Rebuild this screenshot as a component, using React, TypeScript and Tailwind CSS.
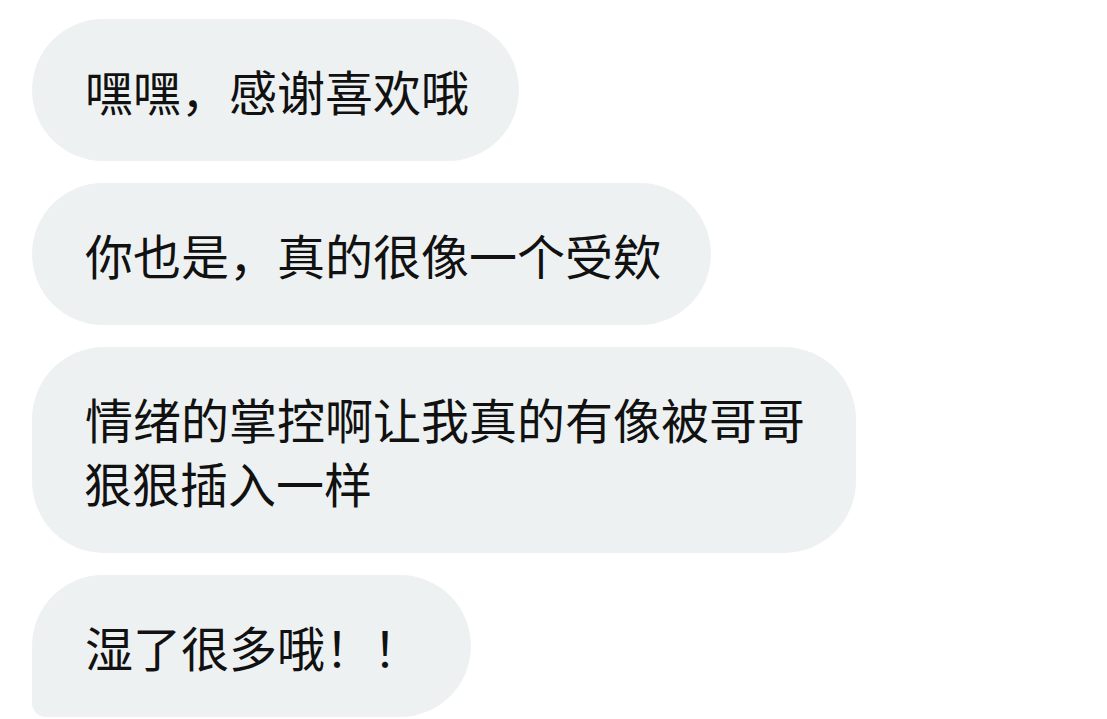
import React from 'react';

const messages = [
  { text: '嘿嘿，感谢喜欢哦', tail: false },
  { text: '你也是，真的很像一个受欸', tail: false },
  { text: '情绪的掌控啊让我真的有像被哥哥狠狠插入一样', tail: false },
  { text: '湿了很多哦！！', tail: true },
];

export default function App() {
  return (
    <div
      className="min-h-screen w-[1107px] h-[719px] overflow-hidden bg-white pt-[19px] pl-[32px]"
      style={{ fontFamily: '"Noto Sans CJK SC", "Noto Sans", sans-serif' }}
    >
      <div className="flex flex-col items-start gap-[22px]">
        {messages.map((m, i) => (
          <div
            key={i}
            className={`max-w-[824px] bg-[#eef1f2] pl-[52px] pr-[50px] py-[39px] text-[48px] leading-[64px] text-[#111111] ${
              m.tail ? 'rounded-[71px] rounded-bl-[14px]' : 'rounded-[72px]'
            }`}
          >
            <span className="pl-px">{m.text}</span>
          </div>
        ))}
      </div>
    </div>
  );
}
